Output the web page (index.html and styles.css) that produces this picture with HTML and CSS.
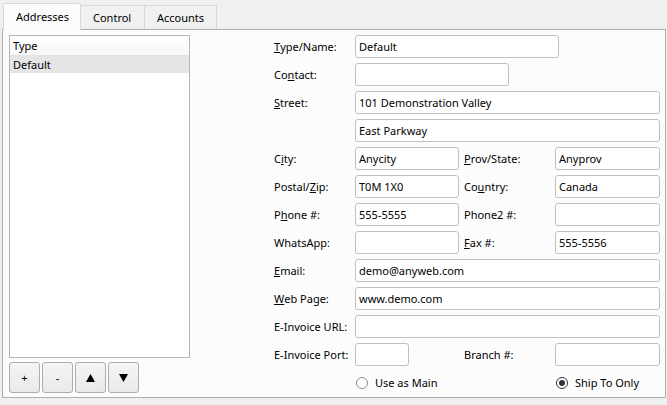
FILE: index.html
```html
<!DOCTYPE html>
<html lang="en">
<head>
  <meta charset="UTF-8" />
  <title>Addresses</title>
  <link rel="stylesheet" href="styles.css">
</head>
<body>
  <div class="tabs">
    <div class="tab active">Addresses</div>
    <div class="tab">Control</div>
    <div class="tab">Accounts</div>
  </div>

  <div class="pane">
    <div class="side">
      <div class="list">
        <div class="list-head">Type</div>
        <div class="list-row selected">Default</div>
      </div>
      <div class="list-btns">
        <button class="btn">+</button>
        <button class="btn">-</button>
        <button class="btn"><svg width="9" height="8" viewBox="0 0 9 8"><polygon points="4.5,0 9,8 0,8" fill="#000"/></svg></button>
        <button class="btn"><svg width="9" height="8" viewBox="0 0 9 8"><polygon points="0,0 9,0 4.5,8" fill="#000"/></svg></button>
      </div>
    </div>

    <div class="form">
      <label class="lbl"><u>T</u>ype/Name:</label>
      <input class="field w-name" value="Default">

      <label class="lbl">Co<u>n</u>tact:</label>
      <input class="field w-contact" value="">

      <label class="lbl"><u>S</u>treet:</label>
      <input class="field wide" value="101 Demonstration Valley">

      <span class="lbl"></span>
      <input class="field wide" value="East Parkway">

      <label class="lbl">C<u>i</u>ty:</label>
      <input class="field" value="Anycity">
      <label class="lbl lbl2"><u>P</u>rov/State:</label>
      <input class="field" value="Anyprov">

      <label class="lbl">Postal/<u>Z</u>ip:</label>
      <input class="field" value="T0M 1X0">
      <label class="lbl lbl2">Co<u>u</u>ntry:</label>
      <input class="field" value="Canada">

      <label class="lbl">P<u>h</u>one #:</label>
      <input class="field" value="555-5555">
      <label class="lbl lbl2">Phone2 #:</label>
      <input class="field" value="">

      <label class="lbl">WhatsApp:</label>
      <input class="field" value="">
      <label class="lbl lbl2"><u>F</u>ax #:</label>
      <input class="field" value="555-5556">

      <label class="lbl"><u>E</u>mail:</label>
      <input class="field wide" value="demo@anyweb.com">

      <label class="lbl"><u>W</u>eb Page:</label>
      <input class="field wide" value="www.demo.com">

      <label class="lbl">E-Invoice URL:</label>
      <input class="field wide" value="">

      <label class="lbl">E-Invoice Port:</label>
      <input class="field w-port" value="">
      <label class="lbl lbl2">Branch #:</label>
      <input class="field" value="">

      <span class="lbl"></span>
      <label class="radio"><input type="radio" name="use"> Use as Main</label>
      <span class="lbl lbl2"></span>
      <label class="radio"><input type="radio" name="use" checked> Ship To Only</label>
    </div>
  </div>
</body>
</html>
```

FILE: styles.css
```css
* { box-sizing: border-box; margin: 0; padding: 0; }
body { background: #f0f0f0; font-family: "Noto Sans", sans-serif; font-size: 11px; color: #000; width: 667px; height: 405px; overflow: hidden; }

.tabs { display: flex; align-items: flex-end; height: 30px; padding-left: 3px; position: relative; z-index: 1; }
.tab { height: 24px; margin-bottom: 1px; padding: 0 12px; display: flex; align-items: center; background: #f0f0f0; border: 1px solid #d9d9d9; border-bottom: none; }
.tab + .tab { margin-left: -1px; }
.tab.active { height: 27px; margin-bottom: 0; padding: 0 13px 2px 12px; background: #fcfcfc; border-color: #d9d9d9; border-radius: 2px 2px 0 0; }
.tab:nth-child(2) { width: 65px; padding-left: 12px; }
.tab:nth-child(3) { width: 73px; }
.tab.active { width: 78px; }

.pane { margin: -1px 0 0 2px; width: 664px; height: 369px; background: #fcfcfc; border: 1px solid #adadad; display: flex; justify-content: space-between; padding: 5px 5px 0 6px; }

.side { width: 181px; display: flex; flex-direction: column; }
.list { height: 323px; background: #fff; border: 1px solid #b5b5b5; }
.list-head { height: 20px; padding: 0 3px; display: flex; align-items: center; border-bottom: 1px solid #e3e3e3; background: linear-gradient(#fff, #f7f7f7); }
.list-row { height: 17px; padding: 0 3px; display: flex; align-items: center; }
.list-row.selected { background: #e5e5e5; }

.list-btns { display: flex; gap: 2px; margin-top: 4px; }
.btn { width: 31px; height: 31px; border: 1px solid #adadad; border-radius: 3px; background: linear-gradient(#f5f5f5, #e9e9e9); font-family: "Noto Sans", sans-serif; font-size: 11px; display: flex; align-items: center; justify-content: center; }

.form { width: 386px; display: grid; grid-template-columns: 81px 104px 5px 91px 105px; grid-auto-rows: 23px; row-gap: 5px; align-content: start; }
.lbl { grid-column: 1; display: flex; align-items: center; white-space: nowrap; }
.lbl2 { grid-column: 4; }
.form > .field, .form > .radio { grid-column: span 1; }
.form > .lbl + .field, .form > .lbl + .radio { grid-column: 2; }
.form > .lbl2 + .field, .form > .lbl2 + .radio { grid-column: 5; }
.field { height: 23px; width: 100%; border: 1px solid #bfbfbf; border-radius: 3px; background: #fff; padding: 0 3px; font-family: "Noto Sans", sans-serif; font-size: 11px; color: #000; outline: none; }
.form > .lbl + .field.wide { grid-column: 2 / 6; }
.form > .lbl + .field.w-name { grid-column: 2 / 6; width: 204px; }
.form > .lbl + .field.w-contact { grid-column: 2 / 6; width: 154px; }
.field.w-port { width: 54px; }

.radio { display: flex; align-items: center; gap: 7px; white-space: nowrap; padding-left: 1px; }
.radio input { appearance: none; width: 12px; height: 12px; border: 1px solid #8a8a8a; border-radius: 50%; background: #fff; display: flex; align-items: center; justify-content: center; }
.radio input:checked { border-color: #333; }
.radio input:checked::after { content: ""; width: 6px; height: 6px; border-radius: 50%; background: #333; }
```
